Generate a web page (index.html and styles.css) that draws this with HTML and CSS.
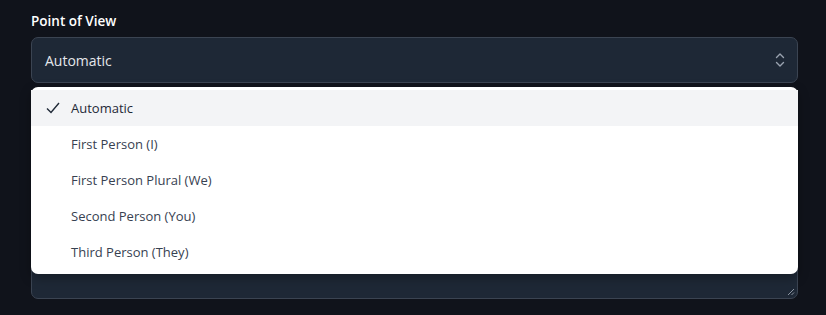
FILE: index.html
```html
<!DOCTYPE html>
<html>
<head>
<meta charset="utf-8">
<link rel="stylesheet" href="styles.css">
</head>
<body>
<div class="field">
  <label class="label">Point of View</label>
  <div class="select-wrap">
    <div class="select">
      <span class="select-value">Automatic</span>
      <svg class="chev" width="10" height="16" viewBox="0 0 10 16"><path d="M1.5 5.5 L5 2 L8.5 5.5 M1.5 10.5 L5 14 L8.5 10.5" fill="none" stroke="#9aa3b0" stroke-width="1.4" stroke-linecap="round" stroke-linejoin="round"/></svg>
    </div>
    <div class="textarea">
      <svg class="grip" width="8" height="8" viewBox="0 0 8 8"><path d="M7 1 L1 7 M7 4.5 L4.5 7" stroke="#8a93a0" stroke-width="1"/></svg>
    </div>
    <ul class="menu">
      <li class="item active"><svg class="check" width="14" height="12" viewBox="0 0 14 12"><path d="M1 6.5 L5 10.5 L13 1" fill="none" stroke="#1f2937" stroke-width="1.4"/></svg><span>Automatic</span></li>
      <li class="item"><span>First Person (I)</span></li>
      <li class="item"><span>First Person Plural (We)</span></li>
      <li class="item"><span>Second Person (You)</span></li>
      <li class="item"><span>Third Person (They)</span></li>
    </ul>
  </div>
</div>
</body>
</html>
```
FILE: styles.css
```css
html, body {
  margin: 0;
  padding: 0;
  background: #10131b;
  font-family: "Open Sans", "Noto Sans", sans-serif;
}
.field {
  padding: 12px 28px 0 31px;
}
.label {
  display: block;
  color: #ffffff;
  font-size: 13.5px;
  font-weight: 600;
  line-height: 18px;
  margin-bottom: 7px;
}
.select-wrap {
  position: relative;
}
.select {
  height: 46px;
  box-sizing: border-box;
  border: 1px solid #3b4452;
  border-radius: 7px;
  background: #1e2836;
  display: flex;
  align-items: center;
  justify-content: space-between;
  padding: 0 12px 0 13px;
  color: #e5e7eb;
  font-size: 14px;
}
.chev { display: block; }
.textarea {
  margin-top: 12px;
  height: 204px;
  box-sizing: border-box;
  border: 1px solid #3b4452;
  border-radius: 7px;
  background: #1e2836;
  position: relative;
}
.grip {
  position: absolute;
  right: 2px;
  bottom: 2px;
}
.menu {
  position: absolute;
  top: 50px;
  left: 0;
  right: 0;
  margin: 0;
  padding: 3px 0 4px;
  list-style: none;
  background: #ffffff;
  border-radius: 7px;
  box-shadow: 0 4px 12px rgba(0,0,0,0.3);
}
.item {
  height: 36px;
  display: flex;
  align-items: center;
  padding-left: 40px;
  position: relative;
  color: #374151;
  font-size: 13px;
}
.item.active {
  background: #f3f4f6;
  color: #1f2937;
  font-weight: 500;
}
.check {
  position: absolute;
  left: 15px;
  top: 12px;
}
```
